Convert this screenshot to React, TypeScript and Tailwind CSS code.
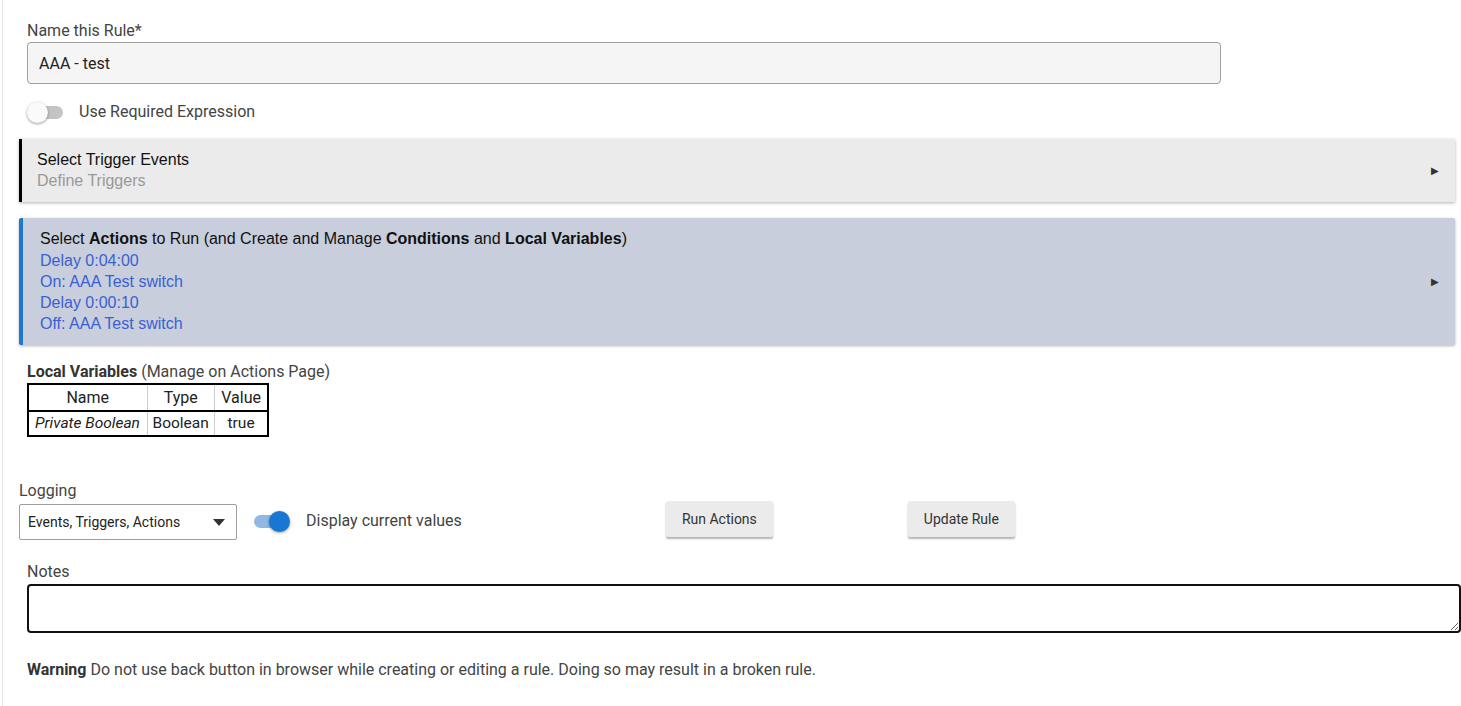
import { useState } from 'react';

const roboto = { fontFamily: 'Roboto, "Liberation Sans", sans-serif' };

function Toggle({ on }: { on: boolean }) {
  return (
    <div className="relative h-[20px] w-[37px] shrink-0">
      <div
        className={`absolute left-[1px] top-[4px] h-[13px] w-[35px] rounded-full ${
          on ? 'bg-[#8fb8e5]' : 'bg-[#c4c4c4]'
        }`}
      />
      <div
        className={`absolute top-0 h-[21px] w-[21px] rounded-full shadow-[0_1px_3px_rgba(0,0,0,0.4)] ${
          on ? 'left-[16px] bg-[#1976d2]' : 'left-0 bg-[#fafafa]'
        }`}
      />
    </div>
  );
}

function Arrow() {
  return <span className="text-[10px] text-[#333]">&#9654;</span>;
}

export default function App() {
  const [name, setName] = useState('AAA - test');

  return (
    <div className="min-h-[706px] w-[1461px] overflow-hidden bg-white text-[#444]" style={roboto}>
      <div className="ml-[2px] min-h-[706px] border-l border-[#e3e3e3] pl-[16px] pt-[21px]">
        <div className="pl-[8px]">
          <div className="text-[16px] leading-[20px] text-[#444]">Name this Rule*</div>
          <input
            value={name}
            onChange={(e) => setName(e.target.value)}
            className="mt-[1px] h-[42px] w-[1194px] rounded-[4px] border border-[#9e9e9e] bg-[#f5f5f5] px-[11px] text-[16px] text-[#222] outline-none"
            style={roboto}
          />
          <div className="mt-[18px] flex items-center gap-[15px]">
            <Toggle on={false} />
            <span className="text-[16px] leading-[20px] text-[#444]">Use Required Expression</span>
          </div>
        </div>

        <div
          className="mt-[17px] flex h-[63px] w-[1436px] items-center justify-between border-l-[3px] border-black bg-[#ebebeb] pb-[1px] pl-[15px] pr-[16px] shadow-[0_1px_3px_rgba(0,0,0,0.3)]"
          style={{ fontFamily: '"Liberation Sans", Arial, sans-serif' }}
        >
          <div className="text-[16px] leading-[21px]">
            <div className="text-[#111]">Select Trigger Events</div>
            <div className="text-[#999]">Define Triggers</div>
          </div>
          <Arrow />
        </div>

        <div
          className="mt-[16px] flex h-[127px] w-[1436px] items-center justify-between rounded-[2px] border-l-[4px] border-[#1e78d0] bg-[#c8cedb] pl-[17px] pr-[16px] shadow-[0_1px_3px_rgba(0,0,0,0.3)]"
          style={{ fontFamily: '"Liberation Sans", Arial, sans-serif' }}
        >
          <div className="text-[16px] leading-[21.25px]">
            <div className="text-[#111]">
              Select <b>Actions</b> to Run (and Create and Manage <b>Conditions</b> and <b>Local Variables</b>)
            </div>
            <div className="text-[#3b5fd4]">Delay 0:04:00</div>
            <div className="text-[#3b5fd4]">On: AAA Test switch</div>
            <div className="text-[#3b5fd4]">Delay 0:00:10</div>
            <div className="text-[#3b5fd4]">Off: AAA Test switch</div>
          </div>
          <Arrow />
        </div>

        <div className="mt-[16px] pl-[8px]">
          <div className="text-[16px] leading-[22px] text-[#444]">
            <b className="font-bold text-[#333]">Local Variables</b> (Manage on Actions Page)
          </div>
          <table className="border-collapse border-2 border-black text-[15.5px] text-[#222]">
            <thead>
              <tr className="border-b-2 border-black">
                <th className="h-[27px] w-[119px] border-r border-[#ccc] text-center text-[16px] font-normal">Name</th>
                <th className="w-[67px] border-r border-[#ccc] text-center text-[16px] font-normal">Type</th>
                <th className="w-[54px] text-center text-[16px] font-normal">Value</th>
              </tr>
            </thead>
            <tbody>
              <tr>
                <td className="h-[24px] whitespace-nowrap border-r border-[#ccc] px-[6px] italic">Private Boolean</td>
                <td className="border-r border-[#ccc] px-[5px] text-center">Boolean</td>
                <td className="text-center">true</td>
              </tr>
            </tbody>
          </table>
        </div>

        <div className="mt-[44px]">
          <div className="text-[16px] leading-[20px] text-[#444]">Logging</div>
          <div className="flex items-start">
            <div className="mt-[3px] flex h-[36px] w-[218px] items-center justify-between rounded-[2px] border border-[#a0a0a0] pl-[8px] pr-[11px] text-[14px] text-[#222]">
              <span>Events, Triggers, Actions</span>
              <svg width="12" height="7" viewBox="0 0 12 7">
                <path d="M0 0 L12 0 L6 7 Z" fill="#333" />
              </svg>
            </div>
            <div className="ml-[16px] mt-[3px] flex h-[34px] items-center gap-[16px]">
              <Toggle on={true} />
              <span className="text-[16px] leading-[20px] text-[#444]">Display current values</span>
            </div>
            <button className="ml-[204px] h-[36px] w-[107px] rounded-[2px] bg-[#ebebeb] text-[14px] text-[#333] shadow-[0_2px_2px_rgba(0,0,0,0.3)]" style={roboto}>
              Run Actions
            </button>
            <button className="ml-[135px] h-[36px] w-[107px] rounded-[2px] bg-[#ebebeb] text-[14px] text-[#333] shadow-[0_2px_2px_rgba(0,0,0,0.3)]" style={roboto}>
              Update Rule
            </button>
          </div>
        </div>

        <div className="mt-[22px] pl-[8px]">
          <div className="text-[16px] leading-[20px] text-[#444]">Notes</div>
          <textarea
            className="mt-[2px] block h-[49px] w-[1434px] rounded-[4px] border-2 border-[#111] bg-white outline-none"
            style={roboto}
          />
          <div className="mt-[27px] text-[16px] leading-[20px] text-[#444]">
            <b className="font-bold text-[#333]">Warning</b> Do not use back button in browser while creating or editing a rule. Doing so may result in a broken rule.
          </div>
        </div>
      </div>
    </div>
  );
}
